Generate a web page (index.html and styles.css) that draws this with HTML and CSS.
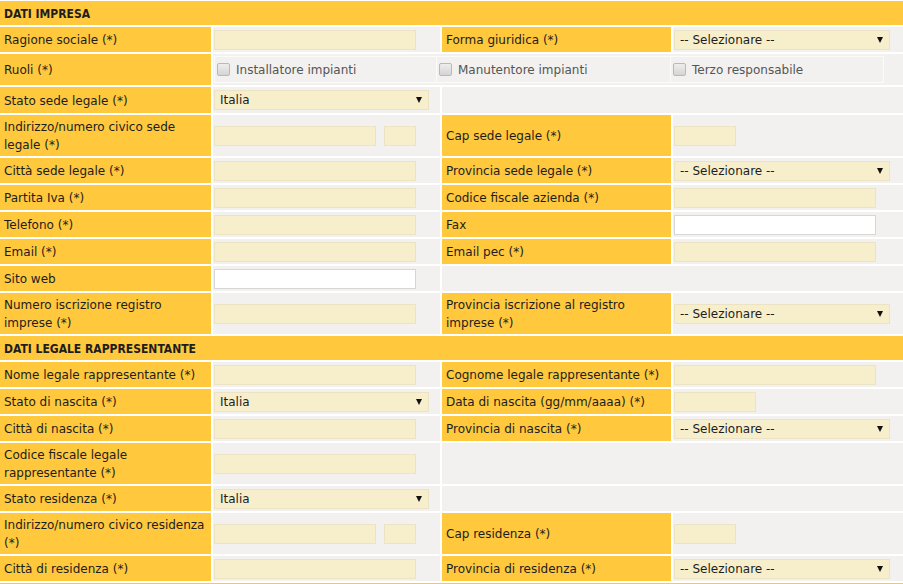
FILE: index.html
```html
<!DOCTYPE html>
<html>
<head>
  <title>Registrazione impresa</title>
  <link rel="stylesheet" href="styles.css">
</head>
<body>
  <div class="page">
    <form action="/registrazione" method="post">
      <table class="form-table">
        <colgroup>
          <col class="c-label1">
          <col class="c-value1">
          <col class="c-label2">
          <col>
        </colgroup>

        <tr class="section"><td colspan="4">DATI IMPRESA</td></tr>

        <tr>
          <td class="label">Ragione sociale (*)</td>
          <td class="value"><input type="text" class="field"></td>
          <td class="label">Forma giuridica (*)</td>
          <td class="value"><div class="select wide"><span>-- Selezionare --</span><span class="arrow"></span></div></td>
        </tr>

        <tr class="roles-row">
          <td class="label">Ruoli (*)</td>
          <td class="value" colspan="3">
            <table class="roles">
              <tr>
                <td class="role r1"><label><input type="checkbox" class="check">Installatore impianti</label></td>
                <td class="role r2"><label><input type="checkbox" class="check">Manutentore impianti</label></td>
                <td class="role r3"><label><input type="checkbox" class="check">Terzo responsabile</label></td>
              </tr>
            </table>
          </td>
        </tr>

        <tr class="select-row">
          <td class="label">Stato sede legale (*)</td>
          <td class="value"><div class="select"><span>Italia</span><span class="arrow"></span></div></td>
          <td class="value" colspan="2"></td>
        </tr>

        <tr>
          <td class="label">Indirizzo/numero civico sede legale (*)</td>
          <td class="value">
            <div class="pair"><input type="text" class="field street"><input type="text" class="field civic"></div>
          </td>
          <td class="label">Cap sede legale (*)</td>
          <td class="value"><input type="text" class="field cap"></td>
        </tr>

        <tr>
          <td class="label">Città sede legale (*)</td>
          <td class="value"><input type="text" class="field"></td>
          <td class="label">Provincia sede legale (*)</td>
          <td class="value"><div class="select wide"><span>-- Selezionare --</span><span class="arrow"></span></div></td>
        </tr>

        <tr>
          <td class="label">Partita Iva (*)</td>
          <td class="value"><input type="text" class="field"></td>
          <td class="label">Codice fiscale azienda (*)</td>
          <td class="value"><input type="text" class="field"></td>
        </tr>

        <tr>
          <td class="label">Telefono (*)</td>
          <td class="value"><input type="text" class="field"></td>
          <td class="label">Fax</td>
          <td class="value"><input type="text" class="field optional"></td>
        </tr>

        <tr>
          <td class="label">Email (*)</td>
          <td class="value"><input type="text" class="field"></td>
          <td class="label">Email pec (*)</td>
          <td class="value"><input type="text" class="field"></td>
        </tr>

        <tr>
          <td class="label">Sito web</td>
          <td class="value"><input type="text" class="field optional"></td>
          <td class="value" colspan="2"></td>
        </tr>

        <tr>
          <td class="label">Numero iscrizione registro imprese (*)</td>
          <td class="value"><input type="text" class="field"></td>
          <td class="label">Provincia iscrizione al registro imprese (*)</td>
          <td class="value"><div class="select wide"><span>-- Selezionare --</span><span class="arrow"></span></div></td>
        </tr>

        <tr class="section"><td colspan="4">DATI LEGALE RAPPRESENTANTE</td></tr>

        <tr>
          <td class="label">Nome legale rappresentante (*)</td>
          <td class="value"><input type="text" class="field"></td>
          <td class="label">Cognome legale rappresentante (*)</td>
          <td class="value"><input type="text" class="field"></td>
        </tr>

        <tr>
          <td class="label">Stato di nascita (*)</td>
          <td class="value"><div class="select"><span>Italia</span><span class="arrow"></span></div></td>
          <td class="label">Data di nascita (gg/mm/aaaa) (*)</td>
          <td class="value"><input type="text" class="field date"></td>
        </tr>

        <tr>
          <td class="label">Città di nascita (*)</td>
          <td class="value"><input type="text" class="field"></td>
          <td class="label">Provincia di nascita (*)</td>
          <td class="value"><div class="select wide"><span>-- Selezionare --</span><span class="arrow"></span></div></td>
        </tr>

        <tr>
          <td class="label">Codice fiscale legale rappresentante (*)</td>
          <td class="value"><input type="text" class="field"></td>
          <td class="value" colspan="2"></td>
        </tr>

        <tr>
          <td class="label">Stato residenza (*)</td>
          <td class="value"><div class="select"><span>Italia</span><span class="arrow"></span></div></td>
          <td class="value" colspan="2"></td>
        </tr>

        <tr>
          <td class="label">Indirizzo/numero civico residenza (*)</td>
          <td class="value">
            <div class="pair"><input type="text" class="field street"><input type="text" class="field civic"></div>
          </td>
          <td class="label">Cap residenza (*)</td>
          <td class="value"><input type="text" class="field cap"></td>
        </tr>

        <tr>
          <td class="label">Città di residenza (*)</td>
          <td class="value"><input type="text" class="field"></td>
          <td class="label">Provincia di residenza (*)</td>
          <td class="value"><div class="select wide"><span>-- Selezionare --</span><span class="arrow"></span></div></td>
        </tr>

        <!-- sezione successiva, fuori dalla schermata -->
        <tr class="section"><td colspan="4"></td></tr>
      </table>
    </form>
  </div>
</body>
</html>
```

FILE: styles.css
```css
html, body {
  margin: 0;
  padding: 0;
  overflow: hidden;
}

body {
  background-color: #ffffff;
  font-family: "DejaVu Sans", Verdana, sans-serif;
  font-size: 12px;
  color: #1d1d1d;
}

.page {
  height: 584px;
  overflow: hidden;
}

.form-table {
  border-collapse: separate;
  border-spacing: 2px;
  width: 910px;
  margin: -1px 0 0 -2px;
  table-layout: fixed;
}

.c-label1 { width: 211px; }
.c-value1 { width: 227px; }
.c-label2 { width: 229px; }

.form-table tr {
  height: 25px;
}

.form-table tr.select-row {
  height: 26px;
}

.form-table td {
  background-color: #f2f1ef;
  line-height: 18px;
  vertical-align: middle;
}

.form-table .label {
  background-color: #ffc83d;
  padding: 3px 2px 2px 4px;
}

.form-table .value {
  padding: 2px 1px;
}

.form-table .section td {
  background-color: #ffc83d;
  font-family: "DejaVu Sans Condensed", "DejaVu Sans", sans-serif;
  font-weight: bold;
  padding: 3px 4px 2px;
}

.form-table tr.section {
  height: 24px;
}

/* campi */
.field {
  display: block;
  width: 202px;
  height: 20px;
  box-sizing: border-box;
  margin: 0;
  padding: 0 4px;
  border: 1px solid #ebe3c4;
  background-color: #f7efcc;
  font-family: inherit;
  font-size: 12px;
}

.field.optional {
  background-color: #ffffff;
  border-color: #d6d6d6;
}

.field.street { width: 162px; }
.field.civic { width: 32px; }
.field.cap { width: 62px; }
.field.date { width: 82px; }

.pair {
  display: flex;
  gap: 8px;
}

.select {
  display: flex;
  align-items: center;
  justify-content: space-between;
  width: 215px;
  height: 20px;
  box-sizing: border-box;
  padding: 0 6px 0 5px;
  border: 1px solid #ebe3c4;
  background-color: #f7efcc;
  color: #1d1d1d;
}

.select.wide {
  width: 216px;
}

.select .arrow {
  width: 0;
  height: 0;
  border-left: 3px solid transparent;
  border-right: 3px solid transparent;
  border-top: 6px solid #111111;
}

/* ruoli */
.form-table tr.roles-row {
  height: 30px;
}

.roles {
  border-collapse: collapse;
  width: 670px;
  table-layout: fixed;
}

.roles td.role {
  box-sizing: border-box;
  height: 26px;
  padding: 0 2px;
  border: 1px solid #fbfbfa;
  color: #555555;
}

.roles .r1 { width: 222px; }
.roles .r2 { width: 234px; }

.roles label {
  display: flex;
  align-items: center;
}

.check {
  appearance: none;
  flex: none;
  width: 13px;
  height: 13px;
  margin: 0 6px 0 0;
  border: 1px solid #b9b9b9;
  border-radius: 2px;
  background: linear-gradient(#eeeeee, #d4d4d4);
}
```
